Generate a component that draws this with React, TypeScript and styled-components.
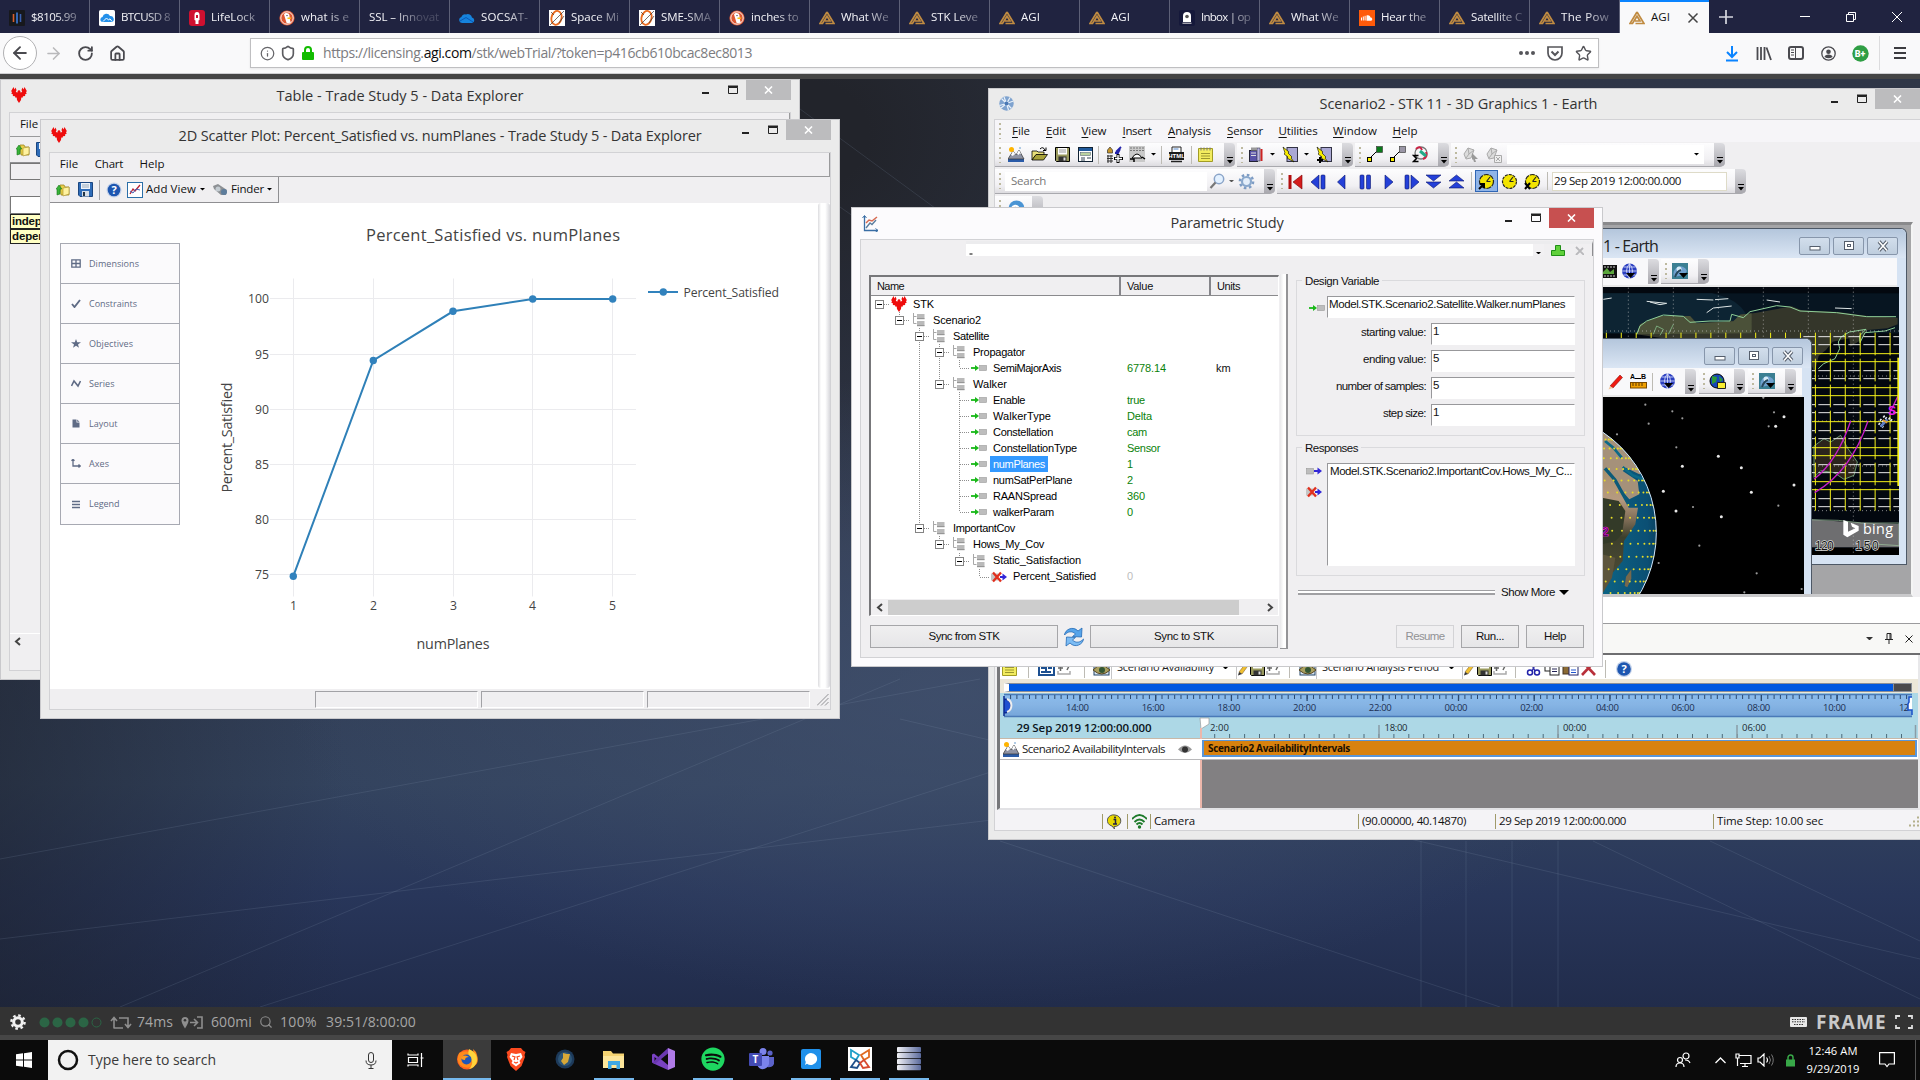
import React, { useLayoutEffect, useRef } from 'react';
import styled, { createGlobalStyle, css } from 'styled-components';
import { Home, RotateCw, ArrowLeft, ArrowRight, Info, Star, Search, Shield } from 'lucide-react';
import { FaSpotify } from 'react-icons/fa';

const UI = '"Open Sans", "Noto Sans", sans-serif';
const MS = '"Liberation Sans", Arial, sans-serif';

const Global = createGlobalStyle`
  * { box-sizing: border-box; }
  html, body { margin: 0; padding: 0; background: #000; overflow: hidden; }
  svg { display: block; flex: none; }
`;

/* ---------- text ---------- */
const TextSpan = styled.span<{ $size: number; $color?: string; $ms?: boolean; $bold?: boolean }>`
  font-family: ${(p) => (p.$ms ? MS : UI)};
  font-size: ${(p) => p.$size}px;
  color: ${(p) => p.$color || '#111'};
  font-weight: ${(p) => (p.$bold ? 700 : 400)};
  line-height: 1.3;
  white-space: pre;
  flex: none;
  justify-self: start;
  u { text-underline-offset: 2px; }
`;

type TProps = { w?: number; s?: number; c?: string; ms?: boolean; b?: boolean; children: React.ReactNode };

/** Text whose tracking is tuned so that the run takes exactly `w` pixels. */
function T({ w, s = 12, c, ms, b, children }: TProps) {
  const ref = useRef<HTMLSpanElement>(null);
  useLayoutEffect(() => {
    const el = ref.current;
    if (!el || !w) return;
    el.style.letterSpacing = '0px';
    const len = (el.textContent || '').length;
    el.style.letterSpacing = `${(w - el.getBoundingClientRect().width) / len}px`;
  }, [w, children]);
  return <TextSpan ref={ref} $size={s} $color={c} $ms={ms} $bold={b}>{children}</TextSpan>;
}

/* ---------- screen ---------- */
const Screen = styled.div`
  width: 1920px; height: 1080px; display: flex; flex-direction: column; overflow: hidden; font-family: ${UI};
`;
const Cell = styled.div<{ $w: number; $top?: number }>`
  flex: none; width: ${(p) => p.$w}px; display: flex; align-items: center; justify-content: center;
  padding-top: ${(p) => p.$top || 0}px; height: 100%;
`;

/* ---------- browser ---------- */
const TabStrip = styled.div`display: flex; height: 33px; flex: none; background: #202340;`;
const Tab = styled.div`
  width: 90px; height: 33px; flex: none; display: flex; align-items: center; gap: 6px; padding: 2px 0 0 9px;
  border-right: 1px solid #5d6077;
`;
const TabLabel = styled.div`
  flex: 1; height: 22px; display: flex; align-items: center;
  mask-image: linear-gradient(90deg, #000 24px, rgba(0,0,0,.2) 52px);
`;
const ActiveTab = styled.div`
  width: 89px; height: 33px; flex: none; background: #f9f9fa; border-top: 2px solid #0a84ff;
  display: flex; align-items: center; gap: 6px; padding: 0 10px 0 9px;
`;
const Spacer = styled.div`flex: 1;`;
const NavBar = styled.div`
  display: flex; align-items: center; height: 41px; flex: none; background: #f9f9fa; border-bottom: 1px solid #cfcfd2; color: #4a4a4f;
`;
const BackButton = styled.div`
  width: 34px; height: 34px; margin-left: 3px; border: 1px solid #b1b1b3; border-radius: 50%; background: #fff;
  display: flex; align-items: center; justify-content: center; flex: none;
`;
const UrlBar = styled.div`
  width: 1349px; height: 30px; margin-left: 117px; background: #fff; border: 1px solid #bfbfc1; display: flex; align-items: center; flex: none;
  box-shadow: 0 1px 2px rgba(0,0,0,.08);
`;
const Strip = styled.div`height: 5px; flex: none; background: #454545;`;
const NavDivider = styled.div`width: 1px; height: 34px; background: #dcdcde; flex: none;`;

const Agi = () => (
  <svg width="16" height="14" viewBox="0 0 16 14"><path d="M8 1 L15 12.5 H6.5 M8 1 L1 12.5 H3.5 L8 5.2 L11 10 H6" fill="none" stroke="#c08b41" strokeWidth="1.7" /></svg>
);
const Duck = () => (
  <svg width="16" height="16" viewBox="0 0 16 16"><circle cx="8" cy="8" r="7.6" fill="#de5833" /><circle cx="8" cy="8" r="6.2" fill="none" stroke="#fff" strokeWidth=".9" /><path d="M5 4.500c1-2 5-2 5.500 1l.2 3 1 4.200-4 .6z" fill="#fff" /><path d="M8.500 7.500h4l-1 1.400H8.500z" fill="#fcc519" /><circle cx="8" cy="5.600" r=".7" fill="#224" /></svg>
);
const Orbit = () => (
  <svg width="16" height="16" viewBox="0 0 16 16"><rect width="16" height="16" fill="#fff" /><ellipse cx="7.500" cy="8" rx="5" ry="7" transform="rotate(14 8 8)" fill="none" stroke="#ea6a1e" strokeWidth="1.800" /><path d="M1 15 15 1M2 2l3 3M10 13l5-7" stroke="#333" strokeWidth=".7" /></svg>
);

const favicons: Record<string, React.ReactNode> = {
  agi: <Agi />,
  duck: <Duck />,
  orbit: <Orbit />,
  bars: <svg width="16" height="16" viewBox="0 0 16 16"><rect width="16" height="16" rx="1" fill="#17181c" /><path d="M4.500 4v8" stroke="#d5602c" strokeWidth="1.600" /><path d="M8 2.500v11" stroke="#3b7ddd" strokeWidth="1.600" /><path d="M11.500 4v8" stroke="#3a5fae" strokeWidth="1.600" /></svg>,
  cloud: <svg width="16" height="16" viewBox="0 0 16 16"><rect width="16" height="16" rx="1.500" fill="#fff" /><path d="M3 12a2.600 2.600 0 0 1 .5-5A4 4 0 0 1 11 6a3.200 3.200 0 0 1 2 6z" fill="#2390ea" /><path d="M4 11.500l3.500-3.500 2 2 1.500-1.200 2 2.700" stroke="#fff" fill="none" /></svg>,
  lock: <svg width="16" height="16" viewBox="0 0 16 16"><rect width="16" height="16" rx="3" fill="#cf1030" /><path d="M5.500 5a2.500 3 0 0 1 5 0v5l-1 .5V14h-3v-3.500l-1-.5z" fill="#fff" /><rect x="7" y="5" width="2" height="3" fill="#cf1030" /></svg>,
  drive: <svg width="16" height="16" viewBox="0 0 16 16"><path d="M3 13a3 3 0 0 1-.6-5.900A3.600 3.600 0 0 1 7 4.500 4.200 4.200 0 0 1 13 7.500 2.800 2.800 0 0 1 13 13z" fill="#1683dd" /><path d="M1 11l6-3.500 7 4.500" stroke="#0a58b8" fill="none" /></svg>,
  inbox: <svg width="16" height="16" viewBox="0 0 16 16"><rect width="16" height="16" rx="2" fill="#15183a" /><path d="M4 12V6a4 4 0 0 1 8 0v6z" fill="#fff" /><circle cx="8" cy="6.500" r="1.800" fill="#555" /><path d="M3.500 13.200h9" stroke="#ddd" /></svg>,
  sound: <svg width="16" height="16" viewBox="0 0 16 16"><rect width="16" height="16" fill="#ff5a0a" /><path d="M2.500 7.500v3M4.300 6.500v4M6.100 5.800v4.700" stroke="#fff" /><path d="M7.500 10.700V5.500c2.400-1 3.900.5 4 2 1.800-.2 2.600 2.700.5 3.200z" fill="#fff" /></svg>,
};

const tabs: [string, string, number][] = [
  ['bars', '$8105.99', 45], ['cloud', 'BTCUSD 8', 49], ['lock', 'LifeLock', 44], ['duck', 'what is e', 48], ['', 'SSL – Innovat', 70],
  ['drive', 'SOCSAT-', 47], ['orbit', 'Space Mi', 48], ['orbit', 'SME-SMA', 50], ['duck', 'inches to', 47.5], ['agi', 'What We', 47.5], ['agi', 'STK Leve', 47],
  ['agi', 'AGI', 19], ['agi', 'AGI', 19], ['inbox', 'Inbox | op', 49], ['agi', 'What We', 47.5], ['sound', 'Hear the', 45], ['agi', 'Satellite C', 51], ['agi', 'The Pow', 48],
];

function Browser() {
  return (
    <>
      <TabStrip>
        {tabs.map(([icon, label, w], i) => (
          <Tab key={i}>{icon ? favicons[icon] : null}<TabLabel><T s={11.5} w={w} c="#f4f4f8">{label}</T></TabLabel></Tab>
        ))}
        <ActiveTab>
          <Agi /><T s={11.5} w={19} c="#111">AGI</T><Spacer />
          <svg width="12" height="12" viewBox="0 0 12 12"><path d="M1.500 1.500l9 9M10.500 1.500l-9 9" stroke="#444" strokeWidth="1.500" /></svg>
        </ActiveTab>
        <Cell $w={34}><svg width="14" height="14"><path d="M7 0v14M0 7h14" stroke="#d6d7e0" strokeWidth="1.700" /></svg></Cell>
        <Spacer />
        <Cell $w={46}><svg width="10" height="10"><path d="M0 4.500h10" stroke="#fff" /></svg></Cell>
        <Cell $w={46}><svg width="10" height="10"><path d="M.5 2.500h7v7h-7zM2.500 2.500v-2h7v7h-2" stroke="#fff" fill="none" /></svg></Cell>
        <Cell $w={46}><svg width="10" height="10"><path d="M0 0l10 10M10 0L0 10" stroke="#fff" /></svg></Cell>
      </TabStrip>
      <NavBar>
        <BackButton><ArrowLeft size={20} strokeWidth={2.3} /></BackButton>
        <Cell $w={32}><ArrowRight size={19} color="#b9b9bb" strokeWidth={2} /></Cell>
        <Cell $w={32}><RotateCw size={17} strokeWidth={2.600} /></Cell>
        <Cell $w={32}><Home size={17} strokeWidth={2.500} /></Cell>
        <UrlBar>
          <Cell $w={33}><Info size={15} color="#66666a" /></Cell>
          <Cell $w={8}><Shield size={16} color="#5c5c60" strokeWidth={2.500} /></Cell>
          <Cell $w={31}><svg width="12" height="14"><path d="M3 7V4a3 3 0 0 1 6 0v3" fill="none" stroke="#12bc00" strokeWidth="2" /><rect y="6" width="12" height="8" rx="1" fill="#12bc00" /></svg></Cell>
          <T s={14} w={429} c="#7c7c80">https://licensing.<span style={{ color: '#0c0c0d' }}>agi.com</span>/stk/webTrial/?token=p416cb610bcac8ec8013</T>
          <Spacer />
          <Cell $w={28}><svg width="16" height="4"><g fill="#55555a"><circle cx="2" cy="2" r="2" /><circle cx="8" cy="2" r="2" /><circle cx="14" cy="2" r="2" /></g></svg></Cell>
          <Cell $w={28}><svg width="16" height="15"><path d="M1 1h14v6a7 7 0 0 1-14 0z" fill="none" stroke="#55555a" strokeWidth="1.700" /><path d="M4.500 5.500L8 9l3.500-3.500" fill="none" stroke="#55555a" strokeWidth="2" /></svg></Cell>
          <Cell $w={29}><Star size={17} color="#55555a" strokeWidth={2} /></Cell>
        </UrlBar>
        <Spacer />
        <Cell $w={32}><svg width="14" height="17"><path d="M7 1v11M2 7l5 5 5-5M1 15.500h12" fill="none" stroke="#0a84ff" strokeWidth="2" /></svg></Cell>
        <Cell $w={32}><svg width="16" height="15"><path d="M1.500 1v13M5 1v13M8.500 1v13M10.500 1.500l4.500 12.500" fill="none" stroke="#4a4a4f" strokeWidth="1.800" /></svg></Cell>
        <Cell $w={32}><svg width="16" height="14"><rect x="1" y="1" width="14" height="12" rx="2" fill="none" stroke="#4a4a4f" strokeWidth="2" /><path d="M7.500 1v12M3 4h3M3 6.500h3M3 9h3" stroke="#4a4a4f" /></svg></Cell>
        <Cell $w={32}><svg width="15" height="15"><circle cx="7.500" cy="7.500" r="6.700" fill="none" stroke="#4a4a4f" strokeWidth="1.300" /><circle cx="7.500" cy="5.700" r="2.300" fill="#4a4a4f" /><path d="M3.500 11c0-3.500 8-3.500 8 0a6 4 0 0 1-8 0z" fill="#4a4a4f" /></svg></Cell>
        <Cell $w={32}><svg width="17" height="17"><circle cx="8.500" cy="8.500" r="8.200" fill="#2f9e44" /><text x="8" y="11.800" textAnchor="middle" fontFamily="Roboto" fontWeight="900" fontSize="9" fill="#fff">B+</text></svg></Cell>
        <Cell $w={3} />
        <NavDivider />
        <Cell $w={40}><svg width="12" height="12"><path d="M0 1h12M0 6h12M0 11h12" stroke="#3c3c40" strokeWidth="2" /></svg></Cell>
      </NavBar>
      <Strip />
    </>
  );
}

/* ---------- desktop and windows ---------- */
const Desktop = styled.div`
  position: relative; height: 928px; flex: none; overflow: hidden;
  background:
    radial-gradient(ellipse 900px 420px at 50% 66%, rgba(66,82,112,.75), transparent 75%),
    radial-gradient(ellipse 620px 520px at 42% 6%, #22242b 10%, rgba(34,36,43,0) 80%),
    linear-gradient(90deg, rgba(28,32,42,.55), transparent 18%),
    linear-gradient(180deg, #2f3647 0%, #323b50 50%, #33435e 76%, #28365a 88%, #212c4b 100%);
`;
const Backdrop = styled.svg`position: absolute; inset: 0;`;

const Win = styled.section<{ $x: number; $y: number; $w: number; $h: number; $bg?: string }>`
  position: absolute; left: ${(p) => p.$x}px; top: ${(p) => p.$y - 79}px; width: ${(p) => p.$w}px; height: ${(p) => p.$h}px;
  background: ${(p) => p.$bg || '#ebebeb'}; border: 1px solid #c9c9cc; display: flex; flex-direction: column; overflow: hidden;
`;
const TitleRow = styled.header<{ $h: number }>`
  display: grid; grid-template-columns: 120px 1fr 120px; height: ${(p) => p.$h}px; flex: none; margin: 0 -1px;
`;
const TitleIcon = styled.div`padding: 7px 0 0 11px;`;
const TitleText = styled.div`display: flex; align-items: center; justify-content: center;`;
const WinButtons = styled.div`display: flex; justify-content: flex-end; padding-right: 9px;`;
const WinClose = styled.div<{ $hot?: boolean }>`
  width: 45px; height: 20px; background: ${(p) => (p.$hot ? '#c75050' : '#bcbcbe')}; display: flex; align-items: center; justify-content: center;
`;
const Client = styled.div<{ $ml?: number; $mr?: number }>`
  flex: 1; margin: 0 ${(p) => p.$mr ?? 8}px 8px ${(p) => p.$ml ?? 8}px; border: 1px solid #d2d2d5; background: #f0eff1; display: flex; flex-direction: column; overflow: hidden; min-height: 0;
`;

function TitleBar({ icon, text, w, hot, h = 32 }: { icon: React.ReactNode; text: string; w: number; hot?: boolean; h?: number }) {
  return (
    <TitleRow $h={h}>
      <TitleIcon>{icon}</TitleIcon>
      <TitleText><T s={14.5} w={w} c="#333">{text}</T></TitleText>
      <WinButtons>
        <svg width="27" height="20"><path d="M10 13h7" stroke="#222" strokeWidth="2" /></svg>
        <svg width="27" height="20"><path d="M9.500 7.500h9v6h-9z" fill="none" stroke="#222" /><path d="M9 6.500h10" stroke="#222" strokeWidth="2" /></svg>
        <WinClose $hot={hot}><svg width="9" height="8"><path d="M1 .5l7 7M8 .5l-7 7" stroke="#fff" strokeWidth="1.600" /></svg></WinClose>
      </WinButtons>
    </TitleRow>
  );
}

const Phoenix = () => (
  <svg width="16" height="16" viewBox="0 0 16 16"><path d="M2.500 0 3.500 2.500 4.500.5 5.500 3 4.800 5l1.700.5.2-1.500L8 3l1.300 1 .2 1.500 1.700-.5-.7-2 1-2.500 1 2L13.500 0l2.300 4-.8 1.500.8 1-1.800 1 .2 1.500-2.200.3-.5 1.500-1.200-.2L10 13l-2 3-2-3-.3-2.400-1.200.2L4 9.300 1.800 9 2 7.500l-1.800-1 .8-1L.2 4z" fill="#ee0c0c" /></svg>
);
const OpenIcon = () => (
  <svg width="16" height="16" viewBox="0 0 16 16"><path d="M5 3h4l1 2h4v8H6z" fill="#e8cf4a" stroke="#9c8620" strokeWidth=".8" /><path d="M8 6l6-1v7l-6 2z" fill="#fff2a0" stroke="#a98f2a" strokeWidth=".6" /><path d="M2 13V7h-.8L4 3l2.800 4H5v5z" fill="#38b338" stroke="#197519" strokeWidth=".6" /></svg>
);
const SaveIcon = () => (
  <svg width="15" height="15" viewBox="0 0 15 15"><path d="M.5.5h14v14H2l-1.500-1.500z" fill="#2f6cb8" stroke="#1b4680" /><rect x="3" y="1" width="9" height="6" fill="#eef3fa" /><path d="M4 3h7M4 5h7" stroke="#9ab" /><rect x="4" y="9" width="7" height="5.500" fill="#d6dee8" /><rect x="5" y="10" width="2" height="4" fill="#234" /></svg>
);
const HelpIcon = ({ r = 7 }: { r?: number }) => (
  <svg width="16" height="16" viewBox="0 0 16 16"><circle cx="8" cy="8" r={r + 0.5} fill="#c4d2ea" /><circle cx="8" cy="8" r={r - 0.7} fill="#1d56b0" /><text x="8" y="12" textAnchor="middle" fontFamily={UI} fontWeight="700" fontSize="11" fill="#fff">?</text></svg>
);
const Tri = ({ c = '#000', s = 6 }: { c?: string; s?: number }) => (
  <svg width={s} height={s / 2} viewBox="0 0 6 3"><path d="M0 0h6L3 3z" fill={c} /></svg>
);

/* ---------- data explorer: table ---------- */
const MenuStrip = styled.div<{ $h: number }>`
  height: ${(p) => p.$h}px; flex: none; display: flex; align-items: center; border-bottom: 1px solid #9a9a9c; border-right: 1px solid #9a9a9c;
`;
const ToolStrip = styled.div<{ $w?: number }>`
  height: 26px; flex: none; display: flex; align-items: center; ${(p) => p.$w && css`width: ${p.$w}px;`}
  border-bottom: 1px solid #8f8f92; border-right: 1px solid #8f8f92;
`;
const TableBlank = styled.div<{ $h: number; $white?: boolean; $mt: number }>`
  height: ${(p) => p.$h}px; margin-top: ${(p) => p.$mt}px; flex: none; border: 1px solid #777; background: ${(p) => (p.$white ? '#fff' : '#f0eff1')};
`;
const YellowRow = styled.div`
  height: 15px; flex: none; background: #ffffc4; border: 1px solid #222; padding-left: 1px; display: flex; align-items: center;
`;
const ScrollRow = styled.div`height: 16px; flex: none; display: flex; align-items: center; padding-left: 4px; border-top: 1px solid #fff; margin-bottom: 21px;`;

function TableWindow() {
  return (
    <Win $x={0} $y={79} $w={800} $h={601}>
      <TitleBar icon={<Phoenix />} text="Table - Trade Study 5 - Data Explorer" w={247} />
      <Client>
        <MenuStrip $h={24}><Cell $w={38}><T s={11.5}>File</T></Cell></MenuStrip>
        <ToolStrip><Cell $w={26}><OpenIcon /></Cell><SaveIcon /></ToolStrip>
        <TableBlank $h={17} $mt={0} />
        <TableBlank $h={18} $mt={16} $white />
        <YellowRow><T s={11.5} w={66} b ms>independent</T></YellowRow>
        <YellowRow><T s={11.5} w={57} b ms>dependent</T></YellowRow>
        <Spacer />
        <ScrollRow><svg width="8" height="9"><path d="M6 1L2 4.500 6 8" fill="none" stroke="#444" strokeWidth="2" /></svg></ScrollRow>
      </Client>
    </Win>
  );
}

/* ---------- data explorer: scatter plot ---------- */
const PlotArea = styled.div`height: 486px; flex: none; display: flex; background: #fff;`;
const SideMenu = styled.div`width: 120px; margin: 40px 0 0 10px; flex: none; height: 282px; border: 1px solid #a7a9b2; background: #fbfafc;`;
const SideItem = styled.div`
  height: 40px; display: flex; align-items: center; border-bottom: 1px solid #a7a9b2; padding-left: 1px;
  &:last-child { border-bottom: none; }
`;
const FadedScroll = styled.div`width: 12px; height: 485px; border-radius: 3px; background: linear-gradient(90deg, #dcdcdf, #fff 25%, #fff 60%, #d8d8dc); flex: none;`;
const StatusStrip = styled.div`flex: 1; display: flex; align-items: center; padding: 1px 1px 0 265px; gap: 3px;`;
const StatusPanel = styled.div`width: 163px; height: 17px; border: 1px solid #a2a2a6; border-right-color: #fff; border-bottom-color: #fff;`;
const VSep = styled.div<{ $h?: number; $c?: string }>`width: 1px; height: ${(p) => p.$h || 18}px; background: ${(p) => p.$c || '#a4a4a8'}; flex: none;`;

const sideItems: [string, number, React.ReactNode][] = [
  ['Dimensions', 50, <path d="M.8.8h8.400v7.400H.8zM5 1v7M1 4.500h8" fill="none" stroke="#5f6b85" strokeWidth="1.300" />],
  ['Constraints', 48, <path d="M1 5l2.500 3L9 1" fill="none" stroke="#5f6b85" strokeWidth="1.900" />],
  ['Objectives', 44, <path d="M5 0l1.200 3.300H10L7 5.400l1 3.400-3-2-3 2 1-3.400-3-2.100h3.800z" fill="#5f6b85" />],
  ['Series', 25.500, <path d="M.5 7L3 2l4 5 2.500-5" fill="none" stroke="#5f6b85" strokeWidth="1.600" />],
  ['Layout', 28.500, <path d="M1.500.5h4v3h3v5h-7zM6.200.5l2.300 2.300H6.200z" fill="#5f6b85" />],
  ['Axes', 20, <path d="M2 0v7h7M.5 1.800L2 .3l1.500 1.500M7.500 5.500L9.200 7 7.500 8.500" fill="none" stroke="#5f6b85" strokeWidth="1.300" />],
  ['Legend', 30.500, <path d="M1 1.500h8M1 4.500h8M1 7.500h8" stroke="#5f6b85" strokeWidth="1.300" />],
];

const xs = [293.500, 373.500, 453.500, 532.500, 612.500];
const ys = [298.500, 354.500, 409.500, 464.500, 519.500, 574.500];
const pts = [[293.3, 576.2], [373.3, 360.5], [453, 311.3], [532.7, 299], [612.7, 299]];

function Chart() {
  return (
    <svg width="638" height="486" viewBox="180 203 638 486" fontFamily={UI} fill="#444">
      <g stroke="#ebebee">
        {xs.map((x) => <path key={x} d={`M${x} 278.500V596.500`} />)}
        {ys.map((y) => <path key={y} d={`M270 ${y}H636`} />)}
      </g>
      <path d={'M' + pts.map((p) => p.join(' ')).join('L')} fill="none" stroke="#2f80b8" strokeWidth="2" />
      {pts.map((p) => <circle key={p[0]} cx={p[0]} cy={p[1]} r="3.700" fill="#3182bd" />)}
      <text x="366" y="241" fontSize="16.500" textLength="254">Percent_Satisfied vs. numPlanes</text>
      {['100', '95', '90', '85', '80', '75'].map((t, i) => <text key={t} x="269" y={ys[i] + 4.300} fontSize="12.200" textAnchor="end">{t}</text>)}
      {xs.map((x, i) => <text key={x} x={x} y="610" fontSize="12.200" textAnchor="middle">{i + 1}</text>)}
      <text x="416.500" y="649" fontSize="14.300" textLength="73">numPlanes</text>
      <text transform="translate(232 492.500) rotate(-90)" fontSize="14.300" textLength="110">Percent_Satisfied</text>
      <path d="M648 292h30" stroke="#3182bd" strokeWidth="2" />
      <circle cx="663.300" cy="292" r="3.700" fill="#3182bd" />
      <text x="683.500" y="297" fontSize="12.200" textLength="95.500">Percent_Satisfied</text>
    </svg>
  );
}

function ScatterWindow() {
  return (
    <Win $x={40} $y={119} $w={800} $h={600}>
      <TitleBar icon={<Phoenix />} text="2D Scatter Plot: Percent_Satisfied vs. numPlanes - Trade Study 5 - Data Explorer" w={523} />
      <Client>
        <MenuStrip $h={24}>
          <Cell $w={38}><T s={11.500} w={18.500}>File</T></Cell>
          <Cell $w={42}><T s={11.500} w={28.500}>Chart</T></Cell>
          <Cell $w={44}><T s={11.500} w={25}>Help</T></Cell>
        </MenuStrip>
        <ToolStrip $w={229}>
          <Cell $w={26}><OpenIcon /></Cell>
          <Cell $w={18}><SaveIcon /></Cell>
          <Cell $w={10}><VSep $h={20} /></Cell>
          <Cell $w={19}><HelpIcon /></Cell>
          <Cell $w={23}><svg width="16" height="16"><rect x=".5" y=".5" width="15" height="15" fill="#fff" stroke="#2b6fa8" /><path d="M3 12l3-5 2 2 5-6" fill="none" stroke="#b23" strokeWidth="1.300" /><path d="M3 9l3 2 3-4 4 1" fill="none" stroke="#46b" /></svg></Cell>
          <T s={11.500} w={50}>Add View</T>
          <Cell $w={12}><Tri s={5} /></Cell>
          <Cell $w={23}><svg width="16" height="13"><path d="M1 3l5-2 9 6-1 5-5 0-7-6z" fill="#8d9094" /><circle cx="12" cy="9" r="3" fill="#5d7d9c" /><circle cx="6" cy="6" r="2.500" fill="#c4ccd2" /></svg></Cell>
          <T s={11.500} w={33}>Finder</T>
          <Cell $w={11}><Tri s={5} /></Cell>
        </ToolStrip>
        <PlotArea>
          <SideMenu>
            {sideItems.map(([label, w, glyph]) => (
              <SideItem key={label}>
                <Cell $w={27}><svg width="10" height="9">{glyph}</svg></Cell>
                <T s={9} w={w} c="#5f6b85">{label}</T>
              </SideItem>
            ))}
          </SideMenu>
          <Chart />
          <FadedScroll />
        </PlotArea>
        <StatusStrip>
          <StatusPanel /><StatusPanel /><StatusPanel />
          <Spacer />
          <svg width="12" height="12"><path d="M0 11.500L11.500 0M4 11.500L11.500 4M8 11.500L11.500 8" stroke="#909094" /></svg>
        </StatusStrip>
      </Client>
    </Win>
  );
}

/* ---------- parametric study ---------- */
const ComboRow = styled.div`height: 15px; flex: none; display: flex; align-items: flex-start; margin: 1px 0 0 105px; border-top: 3px solid #ececee; border-right: 1px solid #8d8d90;`;
const ComboBox = styled.div`width: 567px; height: 12px; background: #fff; padding: 0 0 0 3px; display: flex; align-items: center;`;
const ComboArrow = styled.div`width: 11px; height: 11px; background: #f2f1f3; display: flex; align-items: flex-end; justify-content: center; padding-bottom: 1px;`;
const StudyBody = styled.div`flex: 1; display: flex; padding: 18px 8px 0 8px; min-height: 0;`;
const LeftPane = styled.div`width: 410px; flex: none; display: flex; flex-direction: column; margin-top: 1px;`;
const TreeBox = styled.div`height: 341px; flex: none; border: 2px solid #77777a; border-right: 1px solid #fff; border-bottom: 1px solid #fff; background: #fff; display: flex; flex-direction: column;`;
const TreeHead = styled.div`height: 19px; flex: none; display: flex; background: #f0eff1; border-bottom: 1px solid #8a8a8d;`;
const HeadCell = styled.div<{ $w: number }>`width: ${(p) => p.$w}px; border-right: 2px solid #85858a; display: flex; align-items: center; padding-left: 6px; &:last-child { border-right: 0; }`;
const TreeRows = styled.div`flex: 1; margin-left: -2px;`;
const TreeRow = styled.div`height: 16.04px; display: grid; grid-template-columns: 258px 89px 1fr; align-items: center;`;
const TreeName = styled.div`display: flex; align-items: center; height: 16px;`;
const TreeLabel = styled.div<{ $sel?: boolean }>`
  height: 16px; display: flex; align-items: center; padding: 0 3px; margin-left: 1px; ${(p) => p.$sel && css`background: #3399ff;`}
`;
const HScroll = styled.div`height: 16px; flex: none; display: flex; align-items: center; background: #f0eff1;`;
const HThumb = styled.div`width: 351px; height: 15px; background: #cdcdcd;`;
const SyncRow = styled.div`display: flex; margin-top: 9px; align-items: center; padding-left: 1px;`;
const Button = styled.div<{ $w: number; $off?: boolean }>`
  width: ${(p) => p.$w}px; height: 23px; flex: none; display: flex; align-items: center; justify-content: center;
  border: 1px solid ${(p) => (p.$off ? '#d3d3d6' : '#a6a6a9')}; background: ${(p) => (p.$off ? '#f0eff1' : 'linear-gradient(#f0eff0, #e6e6e8)')};
`;
const Splitter = styled.div`width: 8px; height: 375px; flex: none; margin-left: 1px; background: linear-gradient(90deg, #e8e8ea, #fff 60%, #fff); border-right: 2px solid #949497; border-bottom: 1px solid #949497;`;
const RightPane = styled.div`width: 289px; flex: none; margin-left: 8px; display: flex; flex-direction: column;`;
const Group = styled.div<{ $h: number; $mt: number }>`
  height: ${(p) => p.$h}px; margin-top: ${(p) => p.$mt}px; border: 1px solid #dadadd; flex: none; display: flex; flex-direction: column;
`;
const GroupTitle = styled.div`align-self: flex-start; margin: -7px 0 0 5px; padding: 0 3px; background: #f0eff1; height: 14px; display: flex; align-items: center; flex: none;`;
const FieldRow = styled.div<{ $mt: number }>`display: flex; align-items: center; margin-top: ${(p) => p.$mt}px; padding-right: 9px; justify-content: flex-end; flex: none;`;
const Field = styled.div<{ $w: number; $h?: number; $pl?: number }>`
  width: ${(p) => p.$w}px; height: ${(p) => p.$h || 22}px; flex: none; background: #fff; border: 1px solid #98989b; border-right-color: #fff; border-bottom-color: #fff;
  padding: 0 0 0 ${(p) => p.$pl || 1}px; display: flex; align-items: flex-start;
`;
const FieldLabel = styled.div`padding: 0 5px 3px 0; display: flex;`;
const IconStack = styled.div`display: flex; flex-direction: column; width: 21px; gap: 9px; height: 103px; padding-top: 2px; flex: none;`;
const MoreRow = styled.div`display: flex; align-items: center; margin: 9px 0 0 2px; height: 14px;`;
const DoubleRule = styled.div`width: 197px; height: 5px; border-top: 1px solid #a0a0a3; border-bottom: 2px solid #a0a0a3; background: #fff; margin-right: 6px;`;
const ButtonRow = styled.div`display: flex; gap: 7px; justify-content: flex-end; margin-top: 26px; padding-right: 1px;`;

const InVar = () => <svg width="16" height="10"><path d="M0 5h5" stroke="#18b818" strokeWidth="1.800" /><path d="M4 2L8 5 4 8z" fill="#18b818" /><rect x="8.500" y="2.500" width="7" height="5" fill="#bdbdbd" stroke="#999" strokeWidth=".6" /></svg>;
const OutVar = () => <svg width="16" height="12"><rect x=".5" y="3.500" width="7" height="5.500" fill="#bdbdbd" stroke="#999" strokeWidth=".6" /><path d="M8 6h4" stroke="#3226d8" strokeWidth="2" /><path d="M11.500 2.500L16 6l-4.500 3.500z" fill="#3226d8" /></svg>;
const BadVar = () => <svg width="16" height="12"><rect x="0" y="2.500" width="7" height="7" fill="#c6c6c6" /><path d="M9 6h3" stroke="#3226d8" strokeWidth="2" /><path d="M11.500 2.500L16 6l-4.500 3.500z" fill="#3226d8" /><path d="M2 1.500l8 9M10 1.500l-8 9" stroke="#e0301e" strokeWidth="2.400" /></svg>;
const Branch = () => <svg width="12" height="14"><path d="M.5 0v10.500h3M.5 3.500h3" fill="none" stroke="#a8a8a8" /><rect x="4" y="1" width="7.500" height="5" fill="#bababa" /><rect x="4" y="8" width="7.500" height="5" fill="#bababa" /><path d="M4 5.700h7.500M4 12.700h7.500" stroke="#8e8e8e" /></svg>;

type Node = { n: string; l: number; k: 'root' | 'branch' | 'in' | 'bad'; g?: number[]; v?: string; u?: string; w: number; last?: boolean; sel?: boolean };
const nodes: Node[] = [
  { n: 'STK', l: 0, k: 'root', w: 21, last: true },
  { n: 'Scenario2', l: 1, k: 'branch', w: 48, last: true },
  { n: 'Satellite', l: 2, k: 'branch', w: 36 },
  { n: 'Propagator', l: 3, k: 'branch', g: [2], w: 52 },
  { n: 'SemiMajorAxis', l: 4, k: 'in', g: [2, 3], v: '6778.14', u: 'km', w: 68, last: true },
  { n: 'Walker', l: 3, k: 'branch', g: [2], w: 34, last: true },
  { n: 'Enable', l: 4, k: 'in', g: [2], v: 'true', w: 32 },
  { n: 'WalkerType', l: 4, k: 'in', g: [2], v: 'Delta', w: 58 },
  { n: 'Constellation', l: 4, k: 'in', g: [2], v: 'cam', w: 60 },
  { n: 'ConstellationType', l: 4, k: 'in', g: [2], v: 'Sensor', w: 84 },
  { n: 'numPlanes', l: 4, k: 'in', g: [2], v: '1', w: 52, sel: true },
  { n: 'numSatPerPlane', l: 4, k: 'in', g: [2], v: '2', w: 79 },
  { n: 'RAANSpread', l: 4, k: 'in', g: [2], v: '360', w: 64 },
  { n: 'walkerParam', l: 4, k: 'in', g: [2], v: '0', w: 61, last: true },
  { n: 'ImportantCov', l: 2, k: 'branch', w: 62, last: true },
  { n: 'Hows_My_Cov', l: 3, k: 'branch', w: 71, last: true },
  { n: 'Static_Satisfaction', l: 4, k: 'branch', w: 88, last: true },
  { n: 'Percent_Satisfied', l: 5, k: 'bad', v: '0', w: 83, last: true },
];
const valueWidth: Record<string, number> = { '6778.14': 39, true: 18, Delta: 25, cam: 20, Sensor: 33, '360': 18 };

function TreeLine({ node, index }: { node: Node; index: number }) {
  const box = node.k === 'root' || node.k === 'branch';
  return (
    <TreeRow>
      <TreeName>
        {Array.from({ length: node.l }, (_, i) => (
          <svg key={i} width="20" height="16">{node.g?.includes(i) && <path d="M10.500 0v16" stroke="#8e8e8e" strokeDasharray="1 1" />}</svg>
        ))}
        <svg width="20" height="16">
          <path d={`M10.500 ${index ? 0 : 8}V${node.last ? 8 : 16}M11 8.500h9`} stroke="#8e8e8e" strokeDasharray="1 1" />
          {box && <><rect x="6.500" y="4.500" width="8" height="8" fill="#fff" stroke="#848484" /><path d="M8 8.500h5" stroke="#000" /></>}
        </svg>
        <Cell $w={20}>{node.k === 'root' ? <Phoenix /> : node.k === 'branch' ? <Branch /> : node.k === 'in' ? <InVar /> : <BadVar />}</Cell>
        <TreeLabel $sel={node.sel}><T ms s={11} w={node.w} c={node.sel ? '#fff' : '#000'}>{node.n}</T></TreeLabel>
      </TreeName>
      {node.v ? <T ms s={11} w={valueWidth[node.v]} c={node.k === 'bad' ? '#bdbdbd' : '#0a820a'}>{node.v}</T> : <div />}
      {node.u ? <T ms s={11}>{node.u}</T> : <div />}
    </TreeRow>
  );
}

const params: [string, number, string][] = [['starting value:', 65, '1'], ['ending value:', 63, '5'], ['number of samples:', 90, '5'], ['step size:', 43, '1']];

function StudyWindow() {
  return (
    <Win $x={851} $y={207} $w={752} $h={460} $bg="#fcfbfd">
      <TitleBar
        hot w={113} h={31} text="Parametric Study"
        icon={<svg width="17" height="17"><path d="M2.500 1v14.500H16" fill="none" stroke="#3a6ea5" strokeWidth="1.300" /><path d="M.5 3l2-2.500 2 2.500M13.500 13.500l2.500 2-2.500 1.500" fill="none" stroke="#3a6ea5" /><path d="M4 8l3-3 3 1 5-4" fill="none" stroke="#d86a50" strokeWidth="1.500" /><path d="M4 13l4-5 2 1.500L14 5" fill="none" stroke="#5b7d9e" strokeWidth="1.400" /></svg>}
      />
      <Client>
        <ComboRow>
          <ComboBox><svg width="6" height="11"><path d="M.5 9h3" stroke="#000" /></svg></ComboBox>
          <ComboArrow><Tri s={5} /></ComboArrow>
          <Cell $w={27}><svg width="14" height="11"><path d="M4.500.5h5v5h4v5h-13v-5h4z" fill="#5fd03a" stroke="#1f8f16" /></svg></Cell>
          <Cell $w={16}><svg width="9" height="9"><path d="M1 1l8 8M8 2L1 9" stroke="#b9b9bc" strokeWidth="1.800" /></svg></Cell>
        </ComboRow>
        <StudyBody>
          <LeftPane>
            <TreeBox>
              <TreeHead>
                <HeadCell $w={250}><T ms s={11} w={27}>Name</T></HeadCell>
                <HeadCell $w={90}><T ms s={11} w={26}>Value</T></HeadCell>
                <HeadCell $w={60}><T ms s={11} w={23}>Units</T></HeadCell>
              </TreeHead>
              <TreeRows>{nodes.map((n, i) => <TreeLine key={n.n} node={n} index={i} />)}</TreeRows>
              <HScroll>
                <Cell $w={17}><svg width="8" height="9"><path d="M6 1L2 4.500 6 8" fill="none" stroke="#444" strokeWidth="2" /></svg></Cell>
                <HThumb />
                <Spacer />
                <Cell $w={17}><svg width="8" height="9"><path d="M2 1l4 3.500L2 8" fill="none" stroke="#444" strokeWidth="2" /></svg></Cell>
              </HScroll>
            </TreeBox>
            <SyncRow>
              <Button $w={188}><T ms s={11.500} w={71}>Sync from STK</T></Button>
              <Cell $w={32}><svg width="22" height="22"><path d="M1.500 9C2 3.500 10-.5 15 5l4-3-.5 9-9-.5L12.500 8C9 4.500 4.500 5.500 1.500 9z" fill="#56a4ea" stroke="#2369b5" strokeWidth=".8" /><path d="M20.500 13c-.5 5.500-8.500 9.500-13.500 4l-4 3 .5-9 9 .5L9.500 14c3.500 3.500 8 2.500 11-1z" fill="#7cbcf4" stroke="#2369b5" strokeWidth=".8" /></svg></Cell>
              <Button $w={188}><T ms s={11.500} w={60}>Sync to STK</T></Button>
            </SyncRow>
          </LeftPane>
          <Splitter />
          <RightPane>
            <Group $h={156} $mt={6}>
              <GroupTitle><T ms s={11.500} w={74}>Design Variable</T></GroupTitle>
              <FieldRow $mt={8}><Cell $w={21} $top={2}><InVar /></Cell><Field $w={248}><T ms s={11.500} w={236}>Model.STK.Scenario2.Satellite.Walker.numPlanes</T></Field></FieldRow>
              {params.map(([label, w, v]) => (
                <FieldRow key={label} $mt={5}>
                  <FieldLabel><T ms s={11.500} w={w}>{label}</T></FieldLabel>
                  <Field $w={144}><T ms s={11.500}>{v}</T></Field>
                </FieldRow>
              ))}
            </Group>
            <Group $h={129} $mt={11}>
              <GroupTitle><T ms s={11.500} w={53}>Responses</T></GroupTitle>
              <FieldRow $mt={8}>
                <IconStack><OutVar /><BadVar /></IconStack>
                <Field $w={248} $h={103} $pl={2}><T ms s={11.500} w={242}>Model.STK.Scenario2.ImportantCov.Hows_My_C...</T></Field>
              </FieldRow>
            </Group>
            <MoreRow><DoubleRule /><T ms s={11.500} w={54}>Show More</T><Cell $w={18}><Tri s={10} /></Cell></MoreRow>
            <ButtonRow>
              <Button $w={58} $off><T ms s={11.500} w={39} c="#929295">Resume</T></Button>
              <Button $w={58}><T ms s={11.500} w={28}>Run...</T></Button>
              <Button $w={58}><T ms s={11.500} w={22}>Help</T></Button>
            </ButtonRow>
          </RightPane>
        </StudyBody>
      </Client>
    </Win>
  );
}

/* ---------- STK ---------- */
const StkMenu = styled.div`height: 22px; flex: none; display: flex; align-items: center; background: #f6f5f8;`;
const Bar = styled.div<{ $h: number }>`height: ${(p) => p.$h}px; flex: none; display: flex; align-items: center; padding: 1px 0;`;
const BarGroup = styled.div<{ $ml?: number }>`
  height: 100%; display: flex; align-items: center; background: linear-gradient(#fdfdfe, #f1f0f3 70%, #dddce0); margin-left: ${(p) => p.$ml || 0}px;
  border-bottom: 1px solid #a9a9ae; border-radius: 0 5px 5px 0; flex: none;
`;
const Grip = styled.div`width: 2px; height: 16px; margin: 0 4px 0 4px; flex: none; background: repeating-linear-gradient(#bdb99f 0 2px, transparent 2px 5px);`;
const Cap = styled.div`
  width: 11px; height: 100%; border-radius: 0 4px 4px 0; background: linear-gradient(#dcdce0, #a9a8ae); display: flex; align-items: flex-end; justify-content: center; padding-bottom: 2px; flex: none;
`;
const WhiteField = styled.div<{ $w: number; $pl?: number; $line?: boolean }>`
  width: ${(p) => p.$w}px; height: 19px; background: #fff; display: flex; align-items: center; padding-left: ${(p) => p.$pl || 0}px; flex: none;
  ${(p) => p.$line && css`border: 1px solid #dedbc8;`}
`;
const ActiveCell = styled.div`width: 23px; height: 22px; background: #8fb4e8; border: 1px solid #2f66b5; display: flex; align-items: center; justify-content: center; flex: none;`;

const CapEnd = () => <Cap><svg width="6" height="7"><path d="M0 .5h6" stroke="#000" /><path d="M0 3h6L3 6.500z" fill="#000" /></svg></Cap>;
const Sep = () => <VSep $h={18} $c="#bdbbb4" />;

const px = (d: React.ReactNode) => <svg width="17" height="17" viewBox="0 0 17 17">{d}</svg>;
const Scene = () => px(<><rect y="13" width="16" height="3" fill="#2a5ba8" /><path d="M0 13l5-8 3 4 3-5 5 9z" fill="#8f93a4" stroke="#333" strokeWidth=".7" /><path d="M3 9l2-4 2.500 3.500-1.500 0-1 1.500zM9 7.500L11 4l2 4-1.500-.5-1 1.500z" fill="#fff" /><circle cx="3.500" cy="3.500" r="2.500" fill="#ffb400" /><circle cx="12" cy="2" r="1" fill="#9bd" /></>);
const Folder = () => px(<><path d="M1 5h5l1 1h6v3H5l-4 5z" fill="#e9e07b" stroke="#000" strokeWidth=".8" /><path d="M1 14l4-5.500h11.500L12.500 14z" fill="#a8a23a" stroke="#000" strokeWidth=".8" /><path d="M9 3q3-3 5 1M15 1.500v3h-3" fill="none" stroke="#000" /></>);
const Floppy = () => px(<><path d="M1.500 1.500h14v14h-13l-1-1z" fill="#9a9a5e" stroke="#000" /><rect x="4" y="2" width="9" height="6.500" fill="#fff" /><path d="M5 4h7M5 6h7" stroke="#999" /><rect x="4.500" y="10.500" width="8" height="5" fill="#333" /><rect x="9.500" y="11.500" width="2" height="3" fill="#ddd" /></>);
const Props = () => px(<><rect x="1.500" y="1.500" width="14" height="14" fill="#fff" stroke="#123" /><rect x="2" y="2" width="13" height="3" fill="#205a9c" /><rect x="3.500" y="6.500" width="10" height="3" fill="#b9d2a0" stroke="#456" strokeWidth=".5" /><path d="M4 12h4M10 12h4M4 14h4" stroke="#345" /></>);
const Insert = () => px(<><path d="M1.500 4l2.500-3 2.500 3v3h-5z" fill="#c7962a" stroke="#333" strokeWidth=".7" /><path d="M10 6l5-5M9 7l3 0 2-4" stroke="#22a" strokeWidth="1.800" /><path d="M1 10h6M1 12.500h6M1 15h6M2 9v8M5 9v8" stroke="#333" /><path d="M12 8v9M8 12.500h9" stroke="#000" strokeWidth="3" /><path d="M12 9v7M9 12.500h7" stroke="#fff" strokeWidth="1.400" /></>);
const Dish = () => px(<><rect width="16" height="16" y="0" fill="#c9c9c9" /><path d="M1 2h14M1 4.500h14" stroke="#777" strokeDasharray="2 1" /><path d="M3 12q5-8 10 0z" fill="#fff" stroke="#000" /><path d="M1 13h4v3M13 11l3 2" stroke="#000" fill="none" strokeWidth="1.500" /></>);
const Html = () => px(<><path d="M4 6V1h9v5" fill="#fff" stroke="#222" /><path d="M5.500 3h5" stroke="#58c" /><rect x="1" y="6" width="15" height="8" fill="#1a1a1a" /><text x="8.500" y="12.300" fontSize="6" fontFamily={MS} fontWeight="700" fill="#fff" textAnchor="middle">HTML</text><path d="M3 15.500h11" stroke="#222" strokeWidth="1.500" /></>);
const Note = () => px(<><path d="M1.500 2.500h14v13h-14z" fill="#f2ec5e" stroke="#a29c24" /><path d="M4 1.500v3M7 1.500v3M10 1.500v3M13 1.500v3" stroke="#777" /><path d="M4 7.500h9M4 10h9M4 12.500h9" stroke="#9b9630" /></>);
const Books = () => px(<><rect x="1.500" y="4.500" width="8" height="11" fill="#5a53a8" stroke="#223" /><path d="M3 7h5M3 9.500h5" stroke="#ddd" /><rect x="9" y="2" width="3" height="13" fill="#b9b4e0" stroke="#334" strokeWidth=".6" /><rect x="12.500" y="3" width="2" height="12" fill="#c22" /><rect x="3" y="1.500" width="6" height="3" fill="#999" /></>);
const Flash = ({ plus }: { plus?: boolean }) => px(<><rect x="5" y="1.500" width="10.500" height="14" fill="#aaa8d4" stroke="#334" /><path d="M1 1l6 5-1 1 4 4-1 1 3 4-7-4 1-1-4-3 1-1z" fill="#f8ec00" stroke="#000" strokeWidth=".6" />{plus && <path d="M4 11v6M1 14h6" stroke="#000" strokeWidth="2" />}</>);
const Link = ({ c }: { c: string }) => px(<><path d="M3 13L12 4" stroke="#000" /><rect x="1.500" y="11.500" width="4" height="4" fill="#f8ec00" stroke="#000" /><rect x="10.500" y=".5" width="6" height="6" fill={c} stroke="#444" strokeWidth=".7" /></>);
const Sigma = () => px(<><circle cx="9" cy="7" r="6" fill="none" stroke="#777" strokeWidth="1.300" /><path d="M4 3q4-4 6 1M14 6q2 5-3 7" stroke="#c24" fill="none" strokeWidth="2" /><path d="M8 5l6 5" stroke="#2a8" strokeWidth="3" /><path d="M6.500 9.500H1.500l3 3-3 3h5" fill="none" stroke="#000" strokeWidth="1.500" /></>);
const Gem = ({ x }: { x?: boolean }) => px(<><path d="M2 8l4-6 6 2-3 8-5 1z" fill="#dcdcdc" stroke="#aaa" /><path d="M6 2l1 6 5-4M7 8l-3 4" stroke="#aaa" fill="none" />{x ? <path d="M9.500 9.500h7v7h-7zM11 11l4 4M15 11l-4 4" fill="#eee" stroke="#aaa" /> : <path d="M10 7l6 6-3 0 1 3-2 0-1-3-1 1z" fill="#999" />}</>);
const Magnifier = () => px(<><circle cx="10" cy="6" r="4.700" fill="#e3f1ff" stroke="#8aa4c8" strokeWidth="1.500" /><path d="M6.500 9.500L1.500 15" stroke="#777" strokeWidth="2.200" /></>);
const Cog = () => px(<><circle cx="8.500" cy="8.500" r="6.600" fill="none" stroke="#7d9cc4" strokeWidth="2.500" strokeDasharray="2.600 2.600" /><circle cx="8.500" cy="8.500" r="4.500" fill="#e4eefa" stroke="#8aa8cc" strokeWidth="2.200" /></>);
const Clock = ({ k }: { k: number }) => px(<><circle cx="8.500" cy="8.500" r="7" fill="#f2e400" stroke="#222" strokeWidth="1.200" strokeDasharray={k === 1 ? '3 1' : '5 1'} /><path d="M8.500 8.500L12 4M8.500 8.500h4" stroke="#222" strokeWidth="1.200" />{k !== 1 && <path d={k === 0 ? 'M1 16l5-5M2 11h4v4' : 'M1 10l5 6M6 10l-5 6'} stroke="#000" strokeWidth="2" fill="none" />}</>);
const blue = { fill: '#2440d8', stroke: '#0a1670', strokeWidth: 0.6 };
const play: Record<string, React.ReactNode> = {
  start: <><path d="M3 2v14" stroke="#b00d0d" strokeWidth="3" /><path d="M15 2v14L6 9z" fill="#d41c1c" stroke="#700" strokeWidth=".6" /></>,
  back: <><path d="M9 2v14L1 9z" {...blue} /><rect x="11" y="2" width="4" height="14" rx="1" {...blue} /></>,
  rev: <path d="M12 2v14L4.500 9z" {...blue} />,
  pause: <><rect x="3" y="2" width="4" height="14" rx="1" {...blue} /><rect x="9.500" y="2" width="4" height="14" rx="1" {...blue} /></>,
  fwd: <path d="M5 2v14l8-7z" {...blue} />,
  next: <><path d="M8 2v14l8-7z" {...blue} /><rect x="2" y="2" width="4" height="14" rx="1" {...blue} /></>,
  down: <path d="M1 2h15L8.500 8zM1 9h15l-7.500 6z" {...blue} />,
  up: <path d="M1 8h15L8.500 2zM1 15h15L8.500 9z" {...blue} />,
};
const Grid3 = () => px(<><circle cx="8.500" cy="8" r="7.500" fill="#2b3fc0" /><path d="M1 8h15M2.500 4h12M2.500 12h12M8.500 .5v15M8.500 .5q-6 7.500 0 15q6-7.500 0-15" stroke="#dfe6ff" fill="none" strokeWidth=".8" /><path d="M5 10h9l-4.500 5z" fill="#000" /></>);
const Globe = () => px(<><rect width="16" height="16" fill="#3b7f93" /><path d="M2 14a6.500 7 0 1 1 13-6l-3 4z" fill="#6fa0ce" /><circle cx="7" cy="6" r="2.500" fill="#d6ecf8" /><path d="M3 14q2-6 6-7" stroke="#28485c" fill="none" strokeWidth="2" /><path d="M7 10h9l-4.500 5z" fill="#000" /></>);
const EarthNote = () => px(<><circle cx="8" cy="8" r="7" fill="#1546b8" stroke="#000" /><path d="M3 3l5 1-1 5-4 2zM10 3l4 4-3 2z" fill="#2c9a38" /><path d="M8.500 9.500h8v6h-8z" fill="#f8ec30" stroke="#222" /></>);
const Pencil = () => px(<><path d="M3 13L13 2l2.500 2.500L6 15z" fill="#f01a10" stroke="#700" strokeWidth=".5" /><path d="M3 13l-1.500 3.500L6 15z" fill="#f3c9a0" /></>);
const SmallPencil = () => px(<><path d="M5 12L12 3l2.500 2L8 14z" fill="#f0c030" stroke="#863" strokeWidth=".6" /><path d="M12 3l2.500 2L16 3l-2.500-2z" fill="#d24" /><path d="M5 12l-1 3.500L8 14z" fill="#333" /></>);
const Measure = () => px(<><text x="0" y="6" fontSize="7" fontWeight="700" fontFamily={MS}>A</text><text x="11" y="6" fontSize="7" fontWeight="700" fontFamily={MS}>B</text><path d="M5 5.500h6" stroke="#000" /><rect x=".5" y="9.500" width="16" height="5.500" fill="#f0a000" stroke="#7a4a00" /><path d="M3 10v3M6 10v3M9 10v3M12 10v3" stroke="#5a3400" /></>);
const Film = () => px(<><rect x="0" y="2" width="17" height="13" fill="#111" /><path d="M1 4h15M1 13h15" stroke="#ccc" strokeDasharray="2 1" /><path d="M2 10l5-5 3 4 4-3v5H2z" fill="#5aa53c" /></>);

const menus: [string, string, number, number][] = [['F', 'ile', 34, 18], ['E', 'dit', 36, 20], ['V', 'iew', 40, 25], ['I', 'nsert', 46, 29], ['A', 'nalysis', 59, 43], ['S', 'ensor', 52, 36], ['U', 'tilities', 54, 39], ['W', 'indow', 60, 44], ['H', 'elp', 40, 25]];

/* sub windows of the workspace */
const Workspace = styled.div`
  position: relative; height: 375px; flex: none; margin: 0 7px 0 592px; background: #a5a5a7; border-top: 3px solid #8a8a8c; border-right: 2px solid #f4f4f4; border-bottom: 3px solid #c9c9cb; overflow: hidden;
`;
const SubWin = styled.div<{ $r: number; $t: number; $h: number }>`
  position: absolute; left: 0; top: ${(p) => p.$t}px; right: ${(p) => p.$r}px; height: ${(p) => p.$h}px; background: #d6e3f3;
  border: 1px solid #4d5866; border-left: 0; border-radius: 0 6px 0 0; display: flex; flex-direction: column; padding-right: 9px;
`;
const SubTitle = styled.div`
  height: 29px; flex: none; margin-right: -9px; padding: 5px 8px 0 16px; display: flex; align-items: center; gap: 3px; background: linear-gradient(#b4c6dc, #dbe6f4); border-radius: 0 6px 0 0;
`;
const SubButton = styled.div`width: 31px; height: 18px; border: 1px solid #8796ab; border-radius: 2px; display: flex; align-items: center; justify-content: center; background: linear-gradient(#d2deec, #bfcede);`;
const SubTools = styled.div`height: 27px; flex: none; background: #f8f8fa; display: flex; align-items: center; padding: 1px 0 1px 11px;`;
const Viewport = styled.div`flex: none; padding-left: 15px; border-top: 2px solid #e9e9e9;`;

const SubButtons = () => (
  <>
    <SubButton><svg width="12" height="12"><rect x="1" y="6.500" width="10" height="3.500" fill="#fff" stroke="#555e6c" /></svg></SubButton>
    <SubButton><svg width="12" height="12"><rect x="1.500" y="1.500" width="9" height="8" fill="#fff" stroke="#555e6c" /><rect x="4.500" y="4.500" width="3" height="2" fill="none" stroke="#555e6c" /></svg></SubButton>
    <SubButton><svg width="12" height="12"><path d="M2 1.500l8 9M10 1.500l-8 9" stroke="#555e6c" strokeWidth="3.600" /><path d="M2 1.500l8 9M10 1.500l-8 9" stroke="#fff" strokeWidth="1.600" /></svg></SubButton>
  </>
);

const yellowRows = [403, 427, 505, 529, 607, 685, 709, 787, 811];
const whiteRows = [352, 376, 454, 478, 556, 580, 634, 658, 736, 760, 838, 862];
const cols = Array.from({ length: 20 }, (_, i) => 49 + i * 44.8);

function MapView() {
  return (
    <svg width="297" height="268" viewBox="36 203 891 804">
      <rect x="36" y="203" width="891" height="804" fill="#03080f" />
      <rect x="36" y="222" width="891" height="120" fill="#071521" />
      <path d="M36 222h330q110 20 120 120H36z" fill="#0d2433" />
      <path d="M140 345l10-30 60-25h90l20 22 110-6 20-20 45-5 110-20 30 12 110 5 90 12 88 5v20l-30 12-60 5-20 30-32 20-3-25-50 10-20 25-22 18-12 50-12-30-60-14z" fill="#34362a" />
      <path d="M140 345l10-30 60-25h90l20 22 110-6 20-20 35-4v60z" fill="#4b5139" />
      <path d="M140 345l10-25 20-15 50-18 60 4 20 18 60-4h60l5-20 35 10 20-18 80-18 40 4 30 12 110 5 90 12 88 0M915 325l-30 10-60 5-15 30-2-20 20-20-50 8-25 15-8 15 4 20-14 30-34 15-16 15" fill="none" stroke="#8fd098" strokeWidth="3" />
      <path d="M190 345l10-25 20 10-10 18M235 345l15-30" stroke="#8fd098" strokeWidth="2" fill="none" />
      <path d="M40 240l25-4M170 246l60 6-20 4-30-8M320 240l50 2M350 280l20-14 55-6M375 241l40-3M530 242l40 6M735 266l50 2" stroke="#dfe6e6" strokeWidth="3" fill="none" />
      <path d="M672 680l30-22 20 10 30-20 22 40 28 40-10 40-30 12-30-20-40-6-20 20z" fill="#2b241c" stroke="#8fd098" strokeWidth="2" />
      <path d="M655 900l120 8 152 6v70H655z" fill="#6e6e70" />
      <path d="M655 901l90 2 70 8h112v68l-60-4-40 8" fill="none" stroke="#a0c8a0" strokeWidth="2" />
      <rect x="36" y="986" width="891" height="21" fill="#000" />
      <g stroke="#c8c8c8" strokeWidth="2" strokeDasharray="3 9">
        {[115, 250, 385, 520, 655, 790].map((x) => <path key={x} d={`M${x} 205V1000`} />)}
        {[335, 470, 605, 740, 874].map((y) => <path key={y} d={`M36 ${y}H927`} />)}
      </g>
      <g stroke="#e8e8e8" strokeWidth="3" strokeDasharray="36 9">{whiteRows.map((y) => <path key={y} d={`M640 ${y}H927`} />)}</g>
      <g stroke="#f4f01a" strokeWidth="3">
        {yellowRows.map((y) => <path key={y} d={`M640 ${y}H927`} />)}
        {cols.map((x) => <path key={x} d={`M${x} 340V874`} strokeDasharray="68 10" />)}
      </g>
      <path d="M782 605q-40 120-110 175M834 605q-50 150-160 215M924 530q-15 30-24 50" fill="none" stroke="#c81cc8" strokeWidth="4" />
      <path d="M870 600l14 10M866 612l14 12M896 596l10 8M880 590l10 8" stroke="#e8ecf2" strokeWidth="7" strokeDasharray="5 3" /><path d="M872 622l20-22" stroke="#5c80c8" strokeWidth="8" /><path d="M878 602l14 8" stroke="#e0a030" strokeWidth="6" />
      <text x="894" y="588" fontSize="36" fontFamily={MS} fontWeight="700" fill="#f01af0">S</text>
      <rect x="922" y="415" width="5" height="385" fill="#f4f01a" />
      <path d="M760 902l14 5v30l22-10-10-5-4-12 24 10v14l-34 20-12-8z" fill="#fff" />
      <text x="819" y="944" fontSize="43" fontFamily={UI} textLength="90" fill="#fff">bing</text>
      <g fontSize="36" fontFamily={MS} fill="#111" stroke="#dadada" strokeWidth="4" style={{ paintOrder: 'stroke' }}><text x="675" y="991" textLength="56">120</text><text x="796" y="991" textLength="70">150</text></g>
    </svg>
  );
}

const stars = [[166, 551], [247, 571], [277, 592], [176, 608], [81, 640], [259, 679], [277, 736], [385, 706], [454, 740], [552, 574], [582, 587], [536, 616], [557, 616], [612, 792], [484, 814], [220, 811], [309, 858], [258, 870], [394, 887], [565, 854], [328, 974], [206, 1026], [500, 1057], [463, 1114], [635, 1104], [520, 530]];
const bright = [6, 7, 8, 10, 13, 14, 15, 17, 18, 12];
const dots: [number, number][] = [];
for (let lat = -36; lat <= 54; lat += 6.15) for (let lon = 33; lon < 90; lon += 6.3) {
  const a = (lat * Math.PI) / 180;
  dots.push([-164 + 364 * Math.cos(a) * Math.sin((lon * Math.PI) / 180), 935 - 364 * Math.sin(a)]);
}

function GlobeView() {
  return (
    <svg width="202" height="199" viewBox="36 528 606 597">
      <defs>
        <clipPath id="disc"><circle cx="-164" cy="935" r="363" /></clipPath>
        <linearGradient id="sea" x1="0" x2="1"><stop offset="0" stopColor="#0c6485" /><stop offset=".8" stopColor="#0b4f74" /><stop offset="1" stopColor="#0a3f5e" /></linearGradient>
        <linearGradient id="land" x1="0" y1="0" x2="0" y2="1"><stop offset="0" stopColor="#a8906c" /><stop offset=".25" stopColor="#b59a80" /><stop offset=".4" stopColor="#84705a" /><stop offset=".55" stopColor="#3c3f2c" /><stop offset="1" stopColor="#55503a" /></linearGradient>
      </defs>
      <rect x="36" y="528" width="606" height="597" fill="#000" />
      {stars.map(([x, y], i) => <circle key={i} cx={x} cy={y} r={bright.includes(i) ? 4.5 : 3.3} fill={bright.includes(i) ? '#e8e8e8' : '#9a9a9a'} />)}
      <g clipPath="url(#disc)">
        <rect x="36" y="600" width="170" height="525" fill="url(#sea)" />
        <path d="M36 600l80 70 50 80-18 10-40-20-10 10 45 30 5 40-30 15-70-80-12-15z" fill="#a5917a" />
        <path d="M36 740l60 60 20 60 28 0-8 50-34 50-4 60-34 40-28 60z" fill="url(#land)" />
        <path d="M36 830l50 10 20 30-10 70-20 20-40 10z" fill="#333a28" />
        <path d="M36 1000l40 10-10 60-30 50z" fill="#5d553d" />
        <path d="M45 742l30 35 42 75" stroke="#0c5a78" strokeWidth="10" fill="none" />
        <path d="M98 738l30 25 32 12M45 660l25 20 25 30" stroke="#0c6a88" strokeWidth="8" fill="none" />
        <path d="M104 1095l4-28 16-22 0 28-12 26z" fill="#77684c" />
        {dots.map(([x, y], i) => <circle key={i} cx={x} cy={y} r="3" fill="#e6dc28" />)}
      </g>
      <circle cx="-164" cy="935" r="363" fill="none" stroke="#cfe8ff" strokeWidth="3" />
      <text x="36" y="945" fontSize="36" fontFamily={MS} fontWeight="700" fill="#1a001a" stroke="#f01af0" strokeWidth="2">2</text>
    </svg>
  );
}

/* timeline */
const Gap = styled.div`height: 27px; flex: none; background: #fff; border-bottom: 1px solid #9b9b9d; border-top: 1px solid #fff;`;
const PanelHead = styled.div`height: 31px; flex: none; background: #f8f8f6; display: flex; align-items: center; justify-content: flex-end; padding-right: 1px; border-bottom: 2px solid #6e6e70;`;
const Timeline = styled.div`height: 155px; flex: none; margin: 0 0 0 2px; border-left: 3px solid #77777a; border-right: 2px solid #e8e8ea; border-bottom: 2px solid #e2e2e5; display: flex; flex-direction: column; background: #fff; overflow: hidden;`;
const TimeTools = styled.div`height: 24px; flex: none; display: flex; align-items: center; padding-top: 3px;`;
const TimeCombo = styled.div<{ $w: number }>`width: ${(p) => p.$w}px; height: 22px; border: 1px solid #c6c6c8; background: #fff; display: flex; align-items: center; padding: 0 7px 2px 5px; justify-content: space-between; flex: none;`;
const RangeRow = styled.div`height: 14px; flex: none; background: #ece7d8; padding: 4px 6px 0 4px; display: flex;`;
const RangeFill = styled.div`width: 890px; height: 9px; background: #0058e0; border: 1px solid #8a8f98; border-left: 5px solid #fff;`;
const RangeRest = styled.div`flex: 1; height: 9px; background: #4a4a4c; border: 1px solid #8a8f98; border-left: 0;`;
const TimeRow = styled.div`display: flex; height: 21px; flex: none; border-bottom: 1px solid #b9b9bb;`;
const TimeName = styled.div`width: 200px; flex: none; display: flex; align-items: center; padding-left: 3px; gap: 2px;`;
const Interval = styled.div`flex: 1; margin: 1px 1px 2px 2px; background: #d8820f; border: 2px solid #5a96d8; border-top-width: 1px; display: flex; align-items: center; padding-left: 4px;`;
const TimeBody = styled.div`flex: 1; display: flex;`;
const TimeBlank = styled.div`width: 202px; border-right: 2px solid #edb7ab; background: #fff; flex: none;`;
const TimeGrey = styled.div`flex: 1; background: #828082;`;
const Status = styled.div`flex: 1; display: flex; align-items: center; background: #f4f3f6; padding: 2px 0 0 107px; min-height: 0;`;
const StatusCell = styled.div<{ $w: number }>`width: ${(p) => p.$w}px; height: 15px; border-left: 1px solid #a09a6a; display: flex; align-items: center; padding-left: 3px; flex: none;`;

const hours = ['14:00', '16:00', '18:00', '20:00', '22:00', '00:00', '02:00', '04:00', '06:00', '08:00', '10:00'];

function Rulers() {
  return (
    <svg width="918" height="46" viewBox="1000 693 918 46" fontFamily={UI}>
      <defs><linearGradient id="rl" x1="0" y1="0" x2="0" y2="1"><stop offset="0" stopColor="#8bbcec" /><stop offset=".5" stopColor="#86b4e4" /><stop offset="1" stopColor="#76a6da" /></linearGradient></defs>
      <rect x="1000" y="693" width="918" height="46" fill="#add8e6" />
      <rect x="1004" y="694" width="908" height="22" fill="url(#rl)" />
      <path d="M1004 694.500h908M1004 716.500h908" stroke="#4a7ab8" strokeWidth="1.500" />
      <g stroke="#2c4a70">
        {Array.from({ length: 143 }, (_, i) => <path key={i} d={`M${(1010.600 + i * 6.310).toFixed(1)} 695v4`} />)}
        {hours.map((h, i) => <path key={h} d={`M${1080 + i * 75.700} 695v6`} strokeWidth="1.300" />)}
      </g>
      {hours.map((h, i) => <text key={h} x={1066 + i * 75.700} y="711.300" fontSize="9.500" textLength="23" fill="#1c2f52">{h}</text>)}
      <text x="1899" y="711.300" fontSize="9.500" fill="#1c2f52" textLength="10">12</text>
      <path d="M1912 697h-3v5l-1 2v6h4v5" fill="#fff" stroke="#1850c8" strokeWidth="1.500" />
      <path d="M1004 696v20M1004 699a6 6 0 0 1 0 14z" fill="#1f4fd0" stroke="#0a2a90" strokeWidth="1.500" />
      <path d="M1007 699a7 7 0 0 1 0 13" fill="none" stroke="#eee" strokeWidth="2" />
      <path d="M1000 738.500h918" stroke="#c8b8a8" />
      <text x="1016.500" y="731.500" fontSize="11.500" fontWeight="600" textLength="135" fill="#0a1420">29 Sep 2019 12:00:00.000</text>
      <g stroke="#4c6a7a">{Array.from({ length: 47 }, (_, i) => <path key={i} d={`M${(1214.700 + i * 14.930).toFixed(1)} 734v4`} />)}</g>
      <g stroke="#8a9ca6" strokeWidth="1.500">{[1379, 1558, 1737, 1915.500].map((x) => <path key={x} d={`M${x} 725v13`} />)}</g>
      {([['2:00', 1210, 19], ['18:00', 1384.500, 23], ['00:00', 1563, 23.500], ['06:00', 1742, 24]] as [string, number, number][]).map(([t, x, w]) => <text key={t} x={x} y="730.500" fontSize="9.500" textLength={w} fill="#1a2a34">{t}</text>)}
      <path d="M1200 718h9v6l-8 5z" fill="#fff" stroke="#999" strokeWidth=".7" />
      <path d="M1201 728v11" stroke="#edb7ab" strokeWidth="2" />
    </svg>
  );
}

const Eye = () => <svg width="14" height="9"><path d="M0 4.500q7-8 14 0q-7 7-14 0z" fill="#999" /><circle cx="7" cy="4.500" r="3" fill="#333" /></svg>;
const MiniBlue = () => px(<><rect x="1" y="2" width="15" height="13" fill="#fff" stroke="#1c4f90" strokeWidth="2" /><path d="M3 8h5v4M10 8h4M3 12h10" stroke="#1c4f90" strokeWidth="2" fill="none" /></>);
const Plus7 = () => px(<><path d="M2 11v3h12v-3" fill="none" stroke="#aaa" strokeWidth="1.500" /><path d="M2 8h5M4.500 5v6M9 6h4l-2 4" fill="none" stroke="#666" strokeWidth="1.500" /></>);
const EyeBox = () => px(<><rect x="1" y="1" width="15" height="14" fill="#d8e6f4" stroke="#246" /><path d="M0 10q8-9 17 0q-8 8-17 0z" fill="#a9a060" stroke="#542" /><circle cx="9" cy="10" r="3" fill="#353" /></>);

function StkWindow() {
  return (
    <Win $x={988} $y={88} $w={941} $h={752}>
      <TitleBar
        w={278} h={30} text="Scenario2 - STK 11 - 3D Graphics 1 - Earth"
        icon={<svg width="15" height="15"><circle cx="7.500" cy="7.500" r="7.200" fill="#7fa3cf" /><path d="M7.500 7.500L5 1M7.500 7.500l7-2.500M7.500 7.500l2 6.500M7.500 7.500L.5 9.500M7.500 7.500l5 5M7.500 7.500l-5-5M11 1.500L8 7M2 12l5-4" stroke="#e9f1fa" strokeWidth="1.200" /><circle cx="7.500" cy="7.500" r="2" fill="#4a78b4" /></svg>}
      />
      <Client $ml={5} $mr={7}>
        <StkMenu>
          <Cell $w={9}><Grip /></Cell>
          {menus.map(([u, r, w, tw], i) => <Cell key={i} $w={w}><T s={11.500} w={tw}><u>{u}</u>{r}</T></Cell>)}
        </StkMenu>
        <Bar $h={26}>
          <BarGroup>
            <Grip />
            <Cell $w={22}><Scene /></Cell><Cell $w={25}><Folder /></Cell><Cell $w={21}><Floppy /></Cell><Cell $w={25}><Props /></Cell><Sep />
            <Cell $w={30}><Insert /></Cell><Cell $w={17}><Dish /></Cell><Cell $w={15}><Tri s={5} /></Cell><Sep /><Cell $w={29}><Html /></Cell><Sep />
            <Cell $w={27}><Note /></Cell><Cell $w={5} /><CapEnd />
          </BarGroup>
          <BarGroup $ml={2}><Grip /><Cell $w={18}><Books /></Cell><Cell $w={14}><Tri s={5} /></Cell><Cell $w={22}><Flash /></Cell><Cell $w={10}><Tri s={5} /></Cell><Cell $w={26}><Flash plus /></Cell><Cell $w={5} /><CapEnd /></BarGroup>
          <BarGroup $ml={2}><Grip /><Cell $w={18}><Link c="#0a7a1a" /></Cell><Cell $w={28}><Link c="#9a96a6" /></Cell><Cell $w={18}><Sigma /></Cell><Cell $w={9} /><CapEnd /></BarGroup>
          <BarGroup $ml={2}><Grip /><Cell $w={18}><Gem /></Cell><Cell $w={28}><Gem x /></Cell><WhiteField $w={197} $pl={187}><Tri s={5} /></WhiteField><Cell $w={10} /><CapEnd /></BarGroup>
        </Bar>
        <Bar $h={27}>
          <BarGroup><Grip /><WhiteField $w={202} $pl={6}><T s={11.500} w={35} c="#777">Search</T></WhiteField><Cell $w={20}><Magnifier /></Cell><Cell $w={8}><Tri s={5} c="#555" /></Cell><Cell $w={22}><Cog /></Cell><Cell $w={7} /><CapEnd /></BarGroup>
          <BarGroup $ml={2}>
            <Grip />
            {([['start', 17], ['back', 29], ['rev', 17], ['pause', 30], ['fwd', 16], ['next', 30], ['down', 15], ['up', 30]] as [string, number][]).map(([k, w]) => <Cell key={k} $w={w}>{px(play[k])}</Cell>)}
            <Sep /><Cell $w={3} /><ActiveCell><Clock k={0} /></ActiveCell><Cell $w={22}><Clock k={1} /></Cell><Cell $w={24}><Clock k={2} /></Cell><Cell $w={3} /><Sep /><Cell $w={4} />
            <WhiteField $w={175} $pl={1} $line><T s={11.500} w={127}>29 Sep 2019 12:00:00.000</T></WhiteField><Cell $w={8} /><CapEnd />
          </BarGroup>
        </Bar>
        <Bar $h={27}>
          <BarGroup><Grip /><Cell $w={22}>{px(<><circle cx="8.500" cy="8.500" r="8" fill="#4a94d4" /><path d="M3 9q4-6 8-1" stroke="#fff" fill="none" strokeWidth="2" /></>)}</Cell><Cell $w={5} /><CapEnd /></BarGroup>
        </Bar>
        <Workspace>
          <SubWin $r={4} $t={3} $h={337}>
            <SubTitle><T s={16} w={55} c="#222">1 - Earth</T><Spacer /><SubButtons /></SubTitle>
            <SubTools><Cell $w={20}><Film /></Cell><Cell $w={22}><Grid3 /></Cell><Cell $w={8} /><CapEnd /><BarGroup $ml={2}><Grip /><Cell $w={18}><Globe /></Cell><Cell $w={9} /><CapEnd /></BarGroup></SubTools>
            <Viewport><MapView /></Viewport>
          </SubWin>
          <SubWin $r={99} $t={113} $h={290}>
            <SubTitle><Spacer /><SubButtons /></SubTitle>
            <SubTools>
              <Cell $w={8} /><Cell $w={18}><Pencil /></Cell><Cell $w={28}><Measure /></Cell><Sep /><Cell $w={28}><Grid3 /></Cell><Cell $w={4} /><CapEnd />
              <BarGroup $ml={3}><Grip /><Cell $w={16}><EarthNote /></Cell><Cell $w={9} /><CapEnd /></BarGroup>
              <BarGroup $ml={3}><Grip /><Cell $w={18}><Globe /></Cell><Cell $w={9} /><CapEnd /></BarGroup>
            </SubTools>
            <Viewport><GlobeView /></Viewport>
          </SubWin>
        </Workspace>
        <Gap />
        <PanelHead>
          <Cell $w={20}><Tri s={7} c="#333" /></Cell>
          <Cell $w={20}><svg width="8" height="11"><path d="M2 .5h4v6H2zM0 6.500h8M4 7v4M5 1v5" fill="none" stroke="#222" /></svg></Cell>
          <Cell $w={20}><svg width="8" height="8"><path d="M.5.500l7 7M7.500.500l-7 7" stroke="#222" /></svg></Cell>
        </PanelHead>
        <Timeline>
          <TimeTools>
            <Cell $w={18}><Note /></Cell><Cell $w={10} /><Sep /><Cell $w={8} /><Cell $w={18}><MiniBlue /></Cell><Cell $w={19}><Plus7 /></Cell><Cell $w={10} /><Sep /><Cell $w={7} />
            <Cell $w={19}><EyeBox /></Cell><TimeCombo $w={126}><T s={11} w={97} c="#222">Scenario Availability</T><Tri s={7} /></TimeCombo>
            <Cell $w={10}><SmallPencil /></Cell><Cell $w={20}><Floppy /></Cell><Cell $w={12}><Plus7 /></Cell><Cell $w={10} /><Sep /><Cell $w={8} />
            <Cell $w={18}><EyeBox /></Cell><TimeCombo $w={147}><T s={11} w={117} c="#222">Scenario Analysis Period</T><Tri s={7} /></TimeCombo>
            <Cell $w={10}><SmallPencil /></Cell><Cell $w={22}><Floppy /></Cell><Cell $w={10}><Plus7 /></Cell><Cell $w={10} /><Sep /><Cell $w={8} />
            <Cell $w={18}>{px(<><path d="M5 1l5 10M12 1L7 11" stroke="#33a" strokeWidth="1.500" /><circle cx="5" cy="12.500" r="2.500" fill="none" stroke="#22a" strokeWidth="1.500" /><circle cx="12" cy="12.500" r="2.500" fill="none" stroke="#22a" strokeWidth="1.500" /></>)}</Cell>
            <Cell $w={20}>{px(<><rect x="1" y="2" width="9" height="9" fill="#fff" stroke="#222" /><rect x="6" y="5" width="9" height="10" fill="#fff" stroke="#222" /><path d="M8 9h5M8 11.500h5" stroke="#225" /></>)}</Cell>
            <Cell $w={17}>{px(<><rect x="1" y="2" width="11" height="12" fill="#8a6a34" stroke="#432" /><rect x="7" y="6" width="9" height="9" fill="#fff" stroke="#226" /><path d="M9 10h5M9 12.500h5" stroke="#25c" /></>)}</Cell>
            <Cell $w={18}>{px(<path d="M2 15L8.500 8 15 15M2 1l6.500 7L15 1" fill="none" stroke="#b8303a" strokeWidth="2.600" />)}</Cell>
            <Cell $w={8} /><Sep /><Cell $w={9} /><Cell $w={18}><HelpIcon r={7.5} /></Cell>
          </TimeTools>
          <RangeRow><RangeFill /><RangeRest /></RangeRow>
          <Rulers />
          <TimeRow>
            <TimeName><Scene /><T s={11.500} w={143} c="#222">Scenario2 AvailabilityIntervals</T><Cell $w={4} /><Cell $w={24}><Eye /></Cell></TimeName>
            <Interval><T s={10} w={142} b c="#1c1000">Scenario2 AvailabilityIntervals</T></Interval>
          </TimeRow>
          <TimeBody><TimeBlank /><TimeGrey /></TimeBody>
        </Timeline>
        <Status>
          <StatusCell $w={25}><Cell $w={18}><svg width="16" height="15"><path d="M8 1a6 5.500 0 1 1-1 11.500L7.500 15 5 12a6 5.500 0 0 1 3-11z" fill="#e8d800" stroke="#555" /><path d="M6.500 5.500h2V10M6 10h4" stroke="#224" strokeWidth="1.500" fill="none" /><circle cx="8" cy="3.500" r="1" fill="#224" /></svg></Cell></StatusCell>
          <StatusCell $w={23}><Cell $w={17}><svg width="15" height="15"><path d="M0 5q7.500-8 15 0M2.500 8q5-5 10 0M4.500 10.500q3-3 6 0" fill="none" stroke="#1d7a2a" strokeWidth="1.900" /><circle cx="7.500" cy="13" r="1.700" fill="#1d7a2a" /></svg></Cell></StatusCell>
          <StatusCell $w={208}><T s={11.500} w={41}>Camera</T></StatusCell>
          <StatusCell $w={137}><T s={11.500} w={104}>(90.00000, 40.14870)</T></StatusCell>
          <StatusCell $w={218}><T s={11.500} w={127}>29 Sep 2019 12:00:00.000</T></StatusCell>
          <StatusCell $w={190}><T s={11.500} w={106}>Time Step: 10.00 sec</T></StatusCell>
          <Spacer />
          <svg width="14" height="12"><path d="M3 10.500h11M7 6.500h7M11 2.500h3" stroke="#b4b08c" strokeWidth="2" strokeDasharray="2 2" /></svg>
        </Status>
      </Client>
    </Win>
  );
}

/* ---------- bottom bars ---------- */
const FrameBar = styled.div`height: 28px; flex: none; background: #333; display: flex; align-items: center; padding-top: 2px;`;
const FrameRule = styled.div`height: 5px; flex: none; background: #464646;`;
const Taskbar = styled.div`height: 40px; flex: none; background: #0b0b0b; display: flex; align-items: center;`;
const SearchBox = styled.div`width: 344px; height: 40px; background: #f2f2f2; flex: none; display: flex; align-items: center;`;
const App40 = styled.div<{ $open?: boolean; $active?: boolean; $w?: number }>`
  width: ${(p) => p.$w || 40}px; height: 40px; margin: 0 ${(p) => (49.1 - (p.$w || 40)) / 2}px; flex: none; display: flex; align-items: center; justify-content: center;
  background: ${(p) => (p.$active ? '#3b3b3b' : 'transparent')}; border-bottom: 2px solid ${(p) => (p.$open ? '#76b9ed' : 'transparent')};
`;
const ClockBox = styled.div`width: 66px; display: flex; flex-direction: column; align-items: center; gap: 3px; flex: none; padding-top: 1px;`;

function FrameFooter() {
  return (
    <>
      <FrameBar>
        <Cell $w={35}><svg width="16" height="16"><circle cx="8" cy="8" r="6.600" fill="none" stroke="#f2f2f2" strokeWidth="2.400" strokeDasharray="2.600 2.580" /><circle cx="8" cy="8" r="4.300" fill="none" stroke="#f2f2f2" strokeWidth="3" /></svg></Cell>
        <Cell $w={70}><svg width="63" height="11">{[0, 1, 2, 3].map((i) => <circle key={i} cx={5.500 + i * 13} cy="5.500" r="5" fill="#2b6545" />)}<circle cx="57.500" cy="5.500" r="4.500" fill="none" stroke="#2b6545" /></svg></Cell>
        <Cell $w={32}><svg width="22" height="13"><path d="M4 12.500V2M1 5l3-3.500L7 5M4 12h9M9 2h9v9M15 8l3 3.500L21 8" fill="none" stroke="#8e8e8e" strokeWidth="1.600" /></svg></Cell>
        <T s={14} w={36} c="#a6a6a6">74ms</T>
        <Cell $w={38}><svg width="23" height="13"><path d="M4 12.500Q.5 7 .5 4.500a3.500 3.500 0 0 1 7 0Q7.500 7 4 12.500z" fill="#8e8e8e" /><circle cx="4" cy="4.300" r="1.300" fill="#333" /><path d="M9 6.500h7M13 3l3.500 3.500L13 10M16 1h5v11h-5" fill="none" stroke="#8e8e8e" strokeWidth="1.600" /></svg></Cell>
        <T s={14} w={41} c="#a6a6a6">600mi</T>
        <Cell $w={28}><Search size={14} color="#8e8e8e" /></Cell>
        <T s={14} w={37} c="#a6a6a6">100%</T>
        <Cell $w={9} />
        <T s={14} w={90} c="#a6a6a6">39:51/8:00:00</T>
        <Spacer />
        <svg width="17" height="10"><rect width="17" height="10" rx="1" fill="#e8e8e8" /><path d="M2 2.500h13M2 4.800h13M4 7.500h9" stroke="#333" strokeDasharray="1.500 1" /></svg>
        <Cell $w={9} />
        <T s={19} w={71} c="#c9c9c9" b>FRAME</T>
        <Cell $w={33}><svg width="18" height="14"><path d="M1 4V1h4M13 1h4v3M17 10v3h-4M5 13H1v-3" fill="none" stroke="#ddd" strokeWidth="1.800" /></svg></Cell>
      </FrameBar>
      <FrameRule />
    </>
  );
}

function TaskbarRow() {
  return (
    <Taskbar>
      <Cell $w={48}><svg width="16" height="16"><path d="M0 2.300l7-1v6.200H0zM8 1.200L16 0v7.500H8zM0 8.500h7v6.200l-7-1zM8 8.500h8V16l-8-1.200z" fill="#fff" /></svg></Cell>
      <SearchBox>
        <Cell $w={40}><svg width="22" height="22"><circle cx="11" cy="11" r="9" fill="none" stroke="#111" strokeWidth="2.500" /></svg></Cell>
        <T s={14} w={128} c="#3a3a3a">Type here to search</T>
        <Spacer />
        <Cell $w={42}><svg width="12" height="17"><rect x="3.500" y=".5" width="5" height="10" rx="2.500" fill="none" stroke="#333" /><path d="M1 8.500q0 4.500 5 4.500t5-4.500M6 13v3.500M3.500 16.500h5" fill="none" stroke="#333" /></svg></Cell>
      </SearchBox>
      <Cell $w={46}><svg width="17" height="16"><path d="M1 1.500V3h10V1.500M1.500 5.500h9v5h-9zM1 14.500V13h10v1.500M14.500 1v14M13.500 6h3" fill="none" stroke="#fff" strokeWidth="1.200" /></svg></Cell>
      <Cell $w={4.500} />
      <App40 $open $active $w={48}>
        <svg width="22" height="22" viewBox="0 0 22 22"><circle cx="11" cy="11.500" r="10" fill="#ff5f1f" /><path d="M3 5q-3 8 1 12t12 2 5-12q-1-4-4-6 1 4-1 5Q12 1 3 5z" fill="#ff8a1c" /><path d="M13 1q9 4 8 12-2 7-8 8 5-5 2-10-4-4-2-10z" fill="#ffd43c" /><circle cx="10.500" cy="11.500" r="5" fill="#1e56b8" /><path d="M5 9q4-3 8 0-4 0-4 3-4 0-4-3z" fill="#ff9a1c" /></svg>
      </App40>
      <App40 $w={48}><svg width="20" height="23" viewBox="0 0 20 23"><path d="M5 0h10l2 2.500 2.500 1.500-1 3 .5 2-3.500 9L10 23l-5.500-5L1 9l.5-2-1-3L3 2.500z" fill="#fb4a1f" /><path d="M5 5l5 1 5-1 1.500 4-3 4 1 2-4.500 3.500L5.500 15l1-2-3-4z" fill="#fff" /><path d="M6 8l3 1-1 3M14 8l-3 1 1 3M8 14l2 1 2-1" fill="none" stroke="#fb4a1f" strokeWidth="1.200" /></svg></App40>
      <App40 $w={48}><svg width="20" height="20"><circle cx="10" cy="10" r="9.500" fill="#1d3a5a" /><circle cx="10" cy="10" r="7" fill="#2d5577" /><path d="M8 4l4 1 3 0-1 4-1 4-4 3-3-4 2-3z" fill="#d8a838" /></svg></App40>
      <App40 $open><svg width="22" height="19"><path d="M0 1h8l2 2.500h11V18H0z" fill="#f5d472" /><path d="M0 6h21v12H0z" fill="#fde69a" /><path d="M5 19v-8h12v8h-3.500v-4h-5v4z" fill="#3ea8e5" /></svg></App40>
      <App40><svg width="23" height="22"><path d="M0 6.500L2 5.500 16 17v5L1.500 15.500 0 14.500z" fill="#7a42c4" /><path d="M2.500 9v4.500L5 11z" fill="#0b0b0b" /><path d="M16 0v5.500L3 16l-2-1.500 3-3.500z" fill="#6a38b0" /><path d="M16 0l7 3v16l-7 3z" fill="#b07be8" /></svg></App40>
      <App40 $open><FaSpotify size={24} color="#1ed760" /></App40>
      <App40><svg width="25" height="22"><circle cx="21" cy="5" r="2.600" fill="#5b62c9" /><circle cx="14" cy="3.500" r="3.500" fill="#7b83eb" /><path d="M17 9h8v7q-2 4-7 3z" fill="#5b62c9" /><path d="M8 8h12v8q-2 6-8 5-4-2-4-6z" fill="#7b83eb" /><rect y="5" width="13" height="13" rx="1" fill="#444bb5" /><text x="6.500" y="15" fontFamily={UI} fontWeight="700" fontSize="10" textAnchor="middle" fill="#fff">T</text></svg></App40>
      <App40 $open><svg width="20" height="20"><rect width="20" height="20" rx="2" fill="#2090ea" /><path d="M10 4a6.300 6 0 1 1-4 10.800L4 16l.8-3A6.300 6 0 0 1 10 4z" fill="#fff" /></svg></App40>
      <App40 $open><svg width="24" height="24"><rect width="24" height="24" fill="#fff" /><g fill="none" strokeWidth="1.800"><path d="M3 3l8 5-3 5-5-3z" stroke="#1fa0c8" /><path d="M21 3l-8 5 3 5 5-3z" stroke="#e06a20" /><path d="M3 20l5-7 4 3-3 5z" stroke="#20508a" /><path d="M21 20l-5-7-4 3 3 5z" stroke="#d84a30" /></g></svg></App40>
      <App40 $open><svg width="24" height="24"><defs><linearGradient id="db"><stop offset="0" stopColor="#f2f2f6" /><stop offset="1" stopColor="#5a6a9c" /></linearGradient></defs>{[0, 6, 12, 18].map((y) => <rect key={y} y={y} width="24" height="5.300" rx="1" fill="url(#db)" />)}</svg></App40>
      <Spacer />
      <Cell $w={36}><svg width="16" height="16"><g fill="none" stroke="#fff" strokeWidth="1.200"><circle cx="11" cy="4" r="3" /><circle cx="5" cy="8" r="2.500" /><path d="M1 15q0-4 4-4t4 4M10 8q4 0 5 3" /></g></svg></Cell>
      <Cell $w={38}><svg width="11" height="7"><path d="M.5 6l5-5 5 5" fill="none" stroke="#fff" strokeWidth="1.300" /></svg></Cell>
      <Cell $w={9}><svg width="17" height="14"><path d="M4 2.500h12v8H5M10 11v2.500M7 13.500h6M1 1h3v4H1zM2.500 5v8" fill="none" stroke="#fff" strokeWidth="1.200" /></svg></Cell>
      <Cell $w={34}><svg width="17" height="14"><path d="M1 5h2l4-4v12L3 9H1zM9.500 4.500q2 2.500 0 5" fill="none" stroke="#fff" strokeWidth="1.200" /><path d="M12 3q3 4 0 8M14.500 1.500q3.500 5.500 0 11" fill="none" stroke="#777" /></svg></Cell>
      <Cell $w={16}><svg width="9" height="13"><path d="M2 6V3.500a2.500 2.500 0 0 1 5 0V6" fill="none" stroke="#38a848" strokeWidth="1.500" /><rect y="5.500" width="9" height="7" fill="#38a848" /></svg></Cell>
      <Cell $w={2} />
      <ClockBox><T s={11.200} w={49} c="#fff">12:46 AM</T><T s={11.200} w={53} c="#fff">9/29/2019</T></ClockBox>
      <Cell $w={41}><svg width="16" height="16"><path d="M.6.600h14.800v11.400H10L8 14.500 6 12H.6z" fill="none" stroke="#fff" strokeWidth="1.200" /></svg></Cell>
      <Cell $w={8} /><VSep $h={40} $c="#555" /><Cell $w={4} />
    </Taskbar>
  );
}

export default function App() {
  return (
    <Screen>
      <Global />
      <Browser />
      <Desktop>
        <Backdrop width="1920" height="928">
          <g stroke="#8a9ab4" strokeOpacity=".17">
            <path d="M800 30L1100 250M800 100L900 170M0 860L1000 740M120 928L900 600M260 928L1000 690M0 780L980 600M900 640L1920 880M1000 762L1500 928M1421 762V928M1466 762V928M1512 762V928M1558 762V928M1593 762L1920 920M1710 762L1920 862" fill="none" />
          </g>
        </Backdrop>
        <TableWindow />
        <ScatterWindow />
        <StkWindow />
        <StudyWindow />
      </Desktop>
      <FrameFooter />
      <TaskbarRow />
    </Screen>
  );
}
